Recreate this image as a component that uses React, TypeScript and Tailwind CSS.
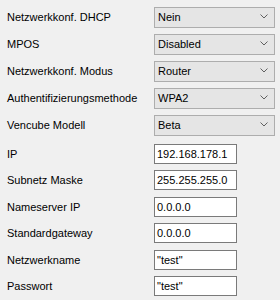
const combos = [
  { label: "Netzwerkkonf. DHCP", value: "Nein", mt: "mt-[7px]" },
  { label: "MPOS", value: "Disabled", mt: "mt-[6px]" },
  { label: "Netzwerkkonf. Modus", value: "Router", mt: "mt-[6px]" },
  { label: "Authentifizierungsmethode", value: "WPA2", mt: "mt-[6px]" },
  { label: "Vencube Modell", value: "Beta", mt: "mt-[6px]" },
];

const fields = [
  { label: "IP", value: "192.168.178.1", mt: "mt-[8px]" },
  { label: "Subnetz Maske", value: "255.255.255.0", mt: "mt-[6px]" },
  { label: "Nameserver IP", value: "0.0.0.0", mt: "mt-[7px]" },
  { label: "Standardgateway", value: "0.0.0.0", mt: "mt-[6px]" },
  { label: "Netzwerkname", value: "\"test\"", mt: "mt-[7px]" },
  { label: "Passwort", value: "\"test\"", mt: "mt-[6px]" },
];

const Chevron = () => (
  <svg width="8" height="5" viewBox="0 0 8 5" className="block">
    <path d="M0.5 0.5 L4 4 L7.5 0.5" fill="none" stroke="#606060" strokeWidth="1" />
  </svg>
);

const App = () => {
  return (
    <div
      className="w-[280px] h-[300px] bg-[#f0f0f0] text-[11px] text-black flex flex-col overflow-hidden"
      style={{ fontFamily: '"Liberation Sans", Arial, sans-serif' }}
    >
      {combos.map((c) => (
        <div key={c.label} className={`flex items-center ${c.mt}`}>
          <span className="w-[154px] pl-[7px] leading-none">{c.label}</span>
          <div className="w-[121px] h-[21px] bg-[#e5e5e5] border border-[#adadad] flex items-center justify-between pl-[3px] pr-[6px]">
            <span className="leading-none">{c.value}</span>
            <div className="-mt-[3px]">
              <Chevron />
            </div>
          </div>
        </div>
      ))}
      {fields.map((f) => (
        <div key={f.label} className={`flex items-center ${f.mt}`}>
          <span className="w-[154px] pl-[7px] leading-none">{f.label}</span>
          <div className="w-[83px] h-[20px] bg-white border border-[#7a7a7a] flex items-center pl-[2px]">
            <span className="leading-none">{f.value}</span>
          </div>
        </div>
      ))}
    </div>
  );
};

export default App;
